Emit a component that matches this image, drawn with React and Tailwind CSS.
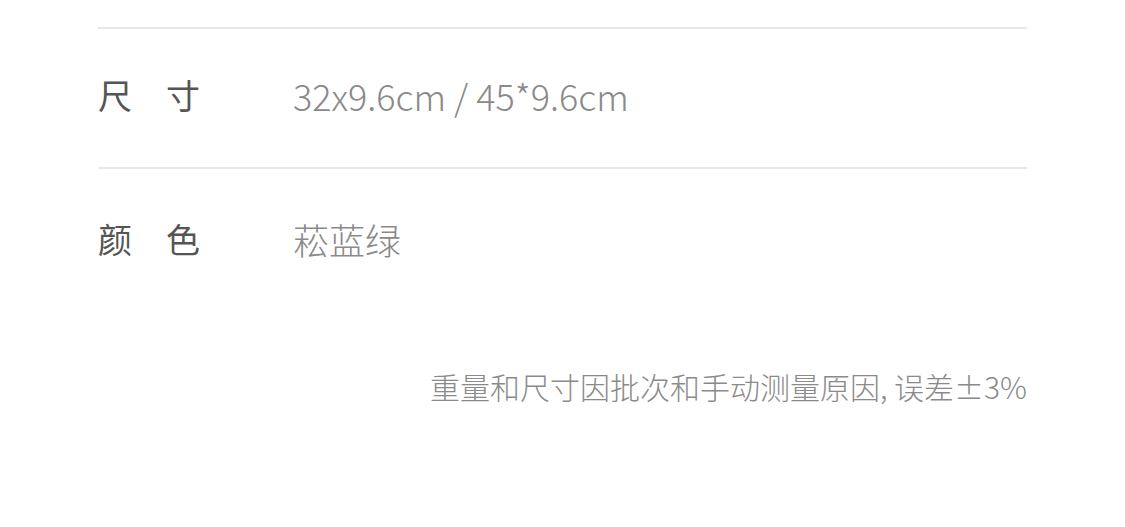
const rows = [
  { label: ['尺', '寸'], value: '32x9.6cm / 45*9.6cm' },
  { label: ['颜', '色'], value: '菘蓝绿' },
];

export default function App() {
  return (
    <div
      className="w-[1125px] h-[527px] bg-white overflow-hidden"
      style={{ fontFamily: '"Noto Sans CJK SC", "Noto Sans", sans-serif' }}
    >
      <div className="mx-[98px] pt-[27px]">
        <div className="h-[2px] bg-[#e8e8e8]" />
        <div className="flex items-center h-[138px] pb-[7px]">
          <Label chars={rows[0].label} />
          <span className="ml-[93px] text-[36px] font-light text-[#8a8a8a] leading-none">{rows[0].value}</span>
        </div>
        <div className="h-[2px] bg-[#e8e8e8]" />
        <div className="flex items-center h-[144px] pb-[5px]">
          <Label chars={rows[1].label} />
          <span className="ml-[93px] text-[36px] font-light text-[#8a8a8a] leading-none">{rows[1].value}</span>
        </div>
        <div className="flex justify-end pt-[58px]">
          <span className="text-[30px] font-light text-[#8a8a8a] leading-none">
            重量和尺寸因批次和手动测量原因, 误差±3%
          </span>
        </div>
      </div>
    </div>
  );
}

function Label({ chars }) {
  return (
    <div className="flex justify-between w-[102px] text-[34px] font-normal text-[#555555] leading-none">
      {chars.map((c) => (
        <span key={c}>{c}</span>
      ))}
    </div>
  );
}
